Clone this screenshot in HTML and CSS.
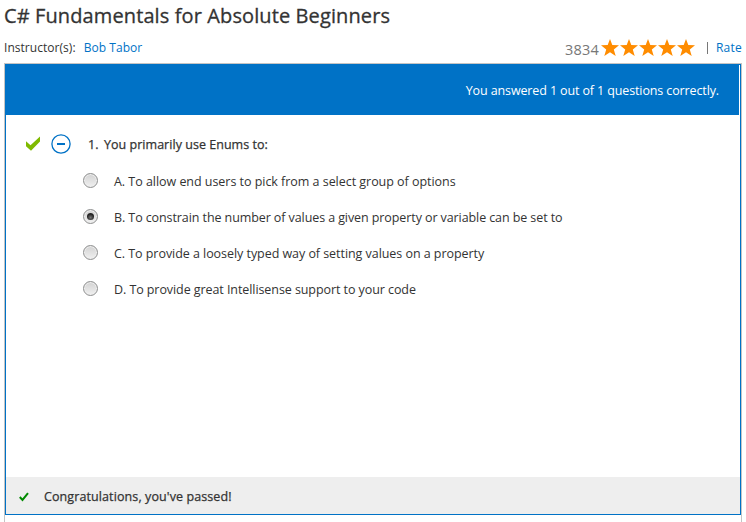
FILE: index.html
```html
<!DOCTYPE html>
<html lang="en">
<head>
<meta charset="utf-8">
<title>C# Fundamentals for Absolute Beginners</title>
<link rel="stylesheet" href="styles.css">
</head>
<body>
<header class="course">
  <h1><span class="title">C# Fundamentals for Absolute Beginners</span></h1>
  <div class="meta">
    <div class="instructors"><span class="label">Instructor(s):</span><a class="name">Bob Tabor</a></div>
    <div class="rating">
      <span class="count">3834</span>
      <svg class="stars" width="95" height="18" viewBox="0 0 95 18">
        <defs><path id="star" d="M9 0 11.3 6 18 6.3 12.8 10.4 14.7 17 9 13.2 3.3 17 5.2 10.4 0 6.3 6.7 6Z"/></defs>
        <use href="#star"/><use href="#star" x="19"/><use href="#star" x="38"/><use href="#star" x="57"/><use href="#star" x="76"/>
      </svg>
      <span class="bar"></span>
      <a class="rate">Rate</a>
    </div>
  </div>
</header>
<main class="frame">
  <section class="quiz">
    <div class="banner"><span class="score">You answered 1 out of 1 questions correctly.</span></div>
    <div class="body">
      <div class="question">
        <svg class="check" width="16" height="16" viewBox="0 0 16 16"><path d="M1 5.2 5.5 9.2 15 .5V5.5L6 14.8 1 10.2Z"/></svg>
        <svg class="collapse" width="20" height="20" viewBox="0 0 20 20"><circle cx="10" cy="10" r="9.1"/><path d="M6 10H14"/></svg>
        <span class="number">1.</span><span class="prompt">You primarily use Enums to:</span>
      </div>
      <div class="options">
        <label class="option"><i class="radio"></i><span class="a">A. To allow end users to pick from a select group of options</span></label>
        <label class="option"><i class="radio on"></i><span class="b">B. To constrain the number of values a given property or variable can be set to</span></label>
        <label class="option"><i class="radio"></i><span class="c">C. To provide a loosely typed way of setting values on a property</span></label>
        <label class="option"><i class="radio"></i><span class="d">D. To provide great Intellisense support to your code</span></label>
      </div>
    </div>
    <footer class="result">
      <svg class="tick" width="10" height="10" viewBox="0 0 10 10"><path d="M.8 5 3.5 8 9 1.2"/></svg>
      <span class="passed">Congratulations, you've passed!</span>
    </footer>
  </section>
</main>
</body>
</html>
```
FILE: styles.css
```css
* { box-sizing: border-box; }
body { margin: 0; height: 522px; overflow: hidden; background: #fff; color: #333; font: 12.5px/18px "Open Sans", "Noto Sans", sans-serif; display: flex; flex-direction: column; }
span, a { white-space: nowrap; }
a { color: #0072c6; }
svg { display: block; flex: none; }
.course { height: 63px; padding: 0 4px; }
h1 { margin: 0; height: 36px; padding-top: 1px; font-size: 20px; line-height: 30px; font-weight: 500; letter-spacing: .11px; -webkit-text-stroke: .3px #333; }
.meta { display: flex; justify-content: space-between; }
.instructors { display: flex; padding-top: 3px; font-size: 12px; }
.label { letter-spacing: .04px; }
.name { margin-left: 8px; letter-spacing: .05px; }
.rating { display: flex; padding-top: 3px; font-size: 12px; }
.count { color: #777; font-size: 14.5px; line-height: 21px; letter-spacing: .2px; margin-right: 2px; }
.stars { fill: #ff8c00; }
.bar { width: 1px; height: 12px; margin: 3px 8px 0 11px; background: #777; }
.rate { letter-spacing: .25px; }
.frame { width: 738px; height: 459px; margin-left: 4px; border: 1px solid #c4c4c4; border-bottom: 0; }
.quiz { width: 736px; height: 451px; border: 1px solid #0072c6; display: flex; flex-direction: column; }
.banner { height: 50px; margin-right: 1px; margin-left: -1px; padding: 2px 20px 0 0; background: #0072c6; color: #fff; display: flex; justify-content: flex-end; align-items: center; letter-spacing: -.12px; }
.body { flex: 1; padding-top: 19px; }
.question { display: flex; height: 20px; align-items: center; padding-left: 19px; -webkit-text-stroke: .25px #333; }
.question svg { -webkit-text-stroke: 0; }
.question span { padding-top: 2px; }
.check { fill: #7fba00; }
.collapse { margin-left: 10px; fill: none; stroke: #0072c6; stroke-width: 1.3; }
.collapse path { stroke-width: 2; }
.number { width: 16px; margin-left: 17px; }
.prompt { letter-spacing: .03px; }
.options { padding: 8px 0 0 77px; }
.option { height: 36px; display: flex; align-items: center; gap: 16px; }
.option span { padding-top: 3px; }
.a { letter-spacing: -.035px; }
.b { letter-spacing: -.09px; }
.c { letter-spacing: -.05px; }
.d { letter-spacing: -.075px; }
.radio { width: 15px; height: 15px; border: 1px solid #8e8f8f; border-radius: 50%; background: linear-gradient(#d2d2d2, #f0f0f0); box-shadow: inset 0 0 0 1px #eee; display: grid; place-items: center; }
.on::after { content: ""; width: 7px; height: 7px; border-radius: 50%; background: radial-gradient(circle at 50% 65%, #777, #222 60%); }
.result { height: 37px; background: #eee; display: flex; align-items: center; padding: 2px 0 0 13px; }
.passed { letter-spacing: .1px; -webkit-text-stroke: .25px #333; }
.tick { fill: none; stroke: #008a00; stroke-width: 2; margin-right: 15px; }
```
